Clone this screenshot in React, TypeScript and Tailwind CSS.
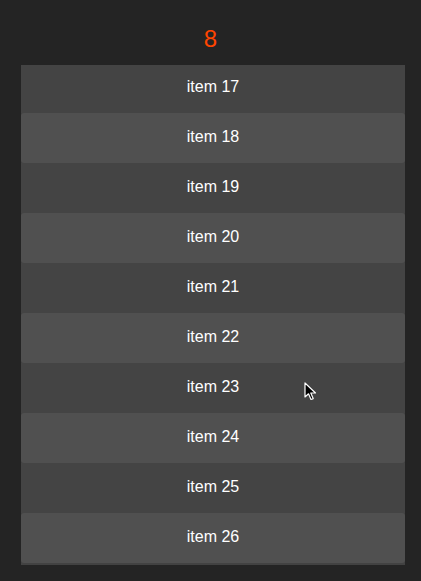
import React from "react";

export default function App() {
  const items = Array.from({ length: 10 }, (_, i) => 17 + i);
  return (
    <div
      className="relative w-[421px] h-[581px] bg-[#242424] overflow-hidden"
      style={{ fontFamily: '"Liberation Sans", Arial, sans-serif' }}
    >
      <div className="h-[65px] flex items-center justify-center pt-[12px]">
        <span className="text-[24px] leading-none text-[#ff4500]">8</span>
      </div>
      <div className="ml-[21px] w-[384px] h-[500px] overflow-hidden bg-[#424242]">
        <div className="-mt-[2px] flex flex-col">
          {items.map((n) => (
            <div
              key={n}
              className={`h-[50px] shrink-0 flex items-center justify-center pb-[2px] text-[16px] text-white ${
                n % 2 === 0 ? "bg-[#505050] rounded-[3px]" : "bg-[#444444]"
              }`}
            >
              item {n}
            </div>
          ))}
        </div>
      </div>
      <svg
        className="absolute left-[304px] top-[382px]"
        width="14"
        height="20"
        viewBox="0 0 14 20"
      >
        <path
          d="M1 1 L1 15 L4.5 11.8 L7 17.5 L9.2 16.6 L6.8 11 L11.5 11 Z"
          fill="#000"
          stroke="#fff"
          strokeWidth="1.2"
          strokeLinejoin="round"
        />
      </svg>
    </div>
  );
}
